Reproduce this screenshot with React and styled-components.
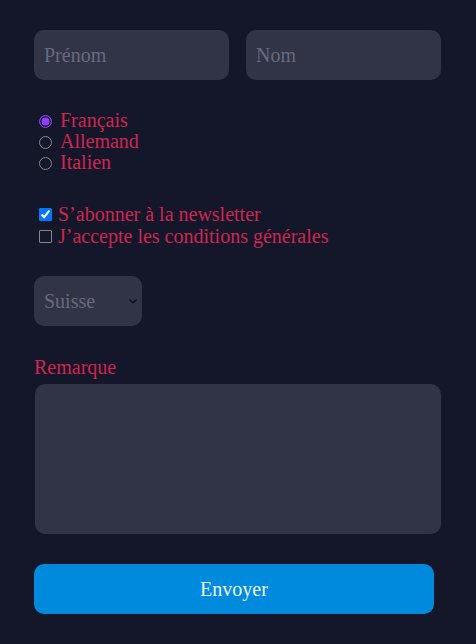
import styled, { createGlobalStyle } from "styled-components";

const GlobalStyle = createGlobalStyle`
    html, body{
        margin: 0;
        background-color: #14172a;
    }

    body{
        font-family: "Liberation Serif", "Times New Roman", serif;
        font-size: 20px;
    }
`

const Form = styled.form`
    display: flex;
    flex-direction: column;
    gap: 30px;
    width: 407px;
    padding: 30px 0 30px 34px;
`

const NameRow = styled.div`
    display: grid;
    grid-template-columns: 1fr 1fr;
    gap: 17px;
`

const TextInput = styled.input`
    box-sizing: border-box;
    height: 50px;
    width: 100%;
    margin: 0;
    padding: 0 10px;
    border: none;
    border-radius: 10px;
    background-color: #313346;
    color: #e4e4ee;
    font: inherit;
    outline: none;

    &::placeholder{
        color: #686a7e;
    }
`

const ChoiceGroup = styled.div`
    display: flex;
    flex-direction: column;
`

const Choice = styled.label`
    display: flex;
    align-items: center;
    gap: ${({$gap}) => $gap}px;
    height: ${({$line}) => $line}px;
    color: #cf2650;
    line-height: ${({$line}) => $line}px;
`

const Radio = styled.input.attrs({type: "radio"})`
    appearance: none;
    box-sizing: border-box;
    width: 13px;
    height: 13px;
    margin: 1px 0 0 5px;
    border: 1px solid #85858c;
    border-radius: 50%;
    background: transparent;

    &:checked{
        border: 1.5px solid #8f3ff5;
        background-color: #8f3ff5;
        box-shadow: inset 0 0 0 1.5px #14172a;
    }
`

const Checkbox = styled.input.attrs({type: "checkbox"})`
    width: 13px;
    height: 13px;
    margin: 1px 0 0 5px;
    accent-color: #0075ff;

    &:not(:checked){
        appearance: none;
        box-sizing: border-box;
        border: 1px solid #85858c;
        border-radius: 1px;
        background: transparent;
    }
`

const SelectWrap = styled.div`
    position: relative;
    width: 108px;
    margin-top: -1px;

    svg{
        position: absolute;
        right: 5px;
        top: 23px;
        pointer-events: none;
    }
`

const Select = styled.select`
    appearance: none;
    box-sizing: border-box;
    width: 108px;
    height: 50px;
    margin: 0;
    padding: 0 10px;
    border: none;
    border-radius: 10px;
    background-color: #313346;
    color: #686a7e;
    font: inherit;
    outline: none;
`

const Field = styled.div`
    display: flex;
    flex-direction: column;
    gap: 6px;
`

const Label = styled.label`
    color: #cf2650;
    line-height: 22px;
`

const TextArea = styled.textarea`
    box-sizing: border-box;
    width: 406px;
    height: 150px;
    margin: 0 0 0 1px;
    padding: 10px;
    border: none;
    border-radius: 10px;
    background-color: #313346;
    color: #e4e4ee;
    font: inherit;
    resize: none;
    outline: none;
`

const SubmitButton = styled.button`
    width: 400px;
    height: 50px;
    border: none;
    border-radius: 10px;
    background-color: #008ade;
    color: #eef5fc;
    font: inherit;
    cursor: pointer;
`

function App(){
    const languages = ["Français", "Allemand", "Italien"];

    return (
        <>
            <GlobalStyle />
            <Form onSubmit={(e) => e.preventDefault()}>
                <NameRow>
                    <TextInput placeholder="Prénom" />
                    <TextInput placeholder="Nom" />
                </NameRow>

                <ChoiceGroup>
                    {
                        languages.map((lang, i) => (
                            <Choice key={lang} $gap={8} $line={21}>
                                <Radio name="langue" defaultChecked={i === 0} />
                                {lang}
                            </Choice>
                        ))
                    }
                </ChoiceGroup>

                <ChoiceGroup>
                    <Choice $gap={6} $line={22}>
                        <Checkbox defaultChecked />
                        S’abonner à la newsletter
                    </Choice>
                    <Choice $gap={6} $line={22}>
                        <Checkbox />
                        J’accepte les conditions générales
                    </Choice>
                </ChoiceGroup>

                <SelectWrap>
                    <Select defaultValue="ch">
                        <option value="ch">Suisse</option>
                        <option value="fr">France</option>
                    </Select>
                    <svg width="8" height="5" viewBox="0 0 8 5" fill="none">
                        <path d="M0.5 0.5L4 4L7.5 0.5" stroke="#0a0b14" strokeWidth="1.2" />
                    </svg>
                </SelectWrap>

                <Field>
                    <Label htmlFor="remarque">Remarque</Label>
                    <TextArea id="remarque" />
                </Field>

                <SubmitButton type="submit">Envoyer</SubmitButton>
            </Form>
        </>
    )
}

export default App;
